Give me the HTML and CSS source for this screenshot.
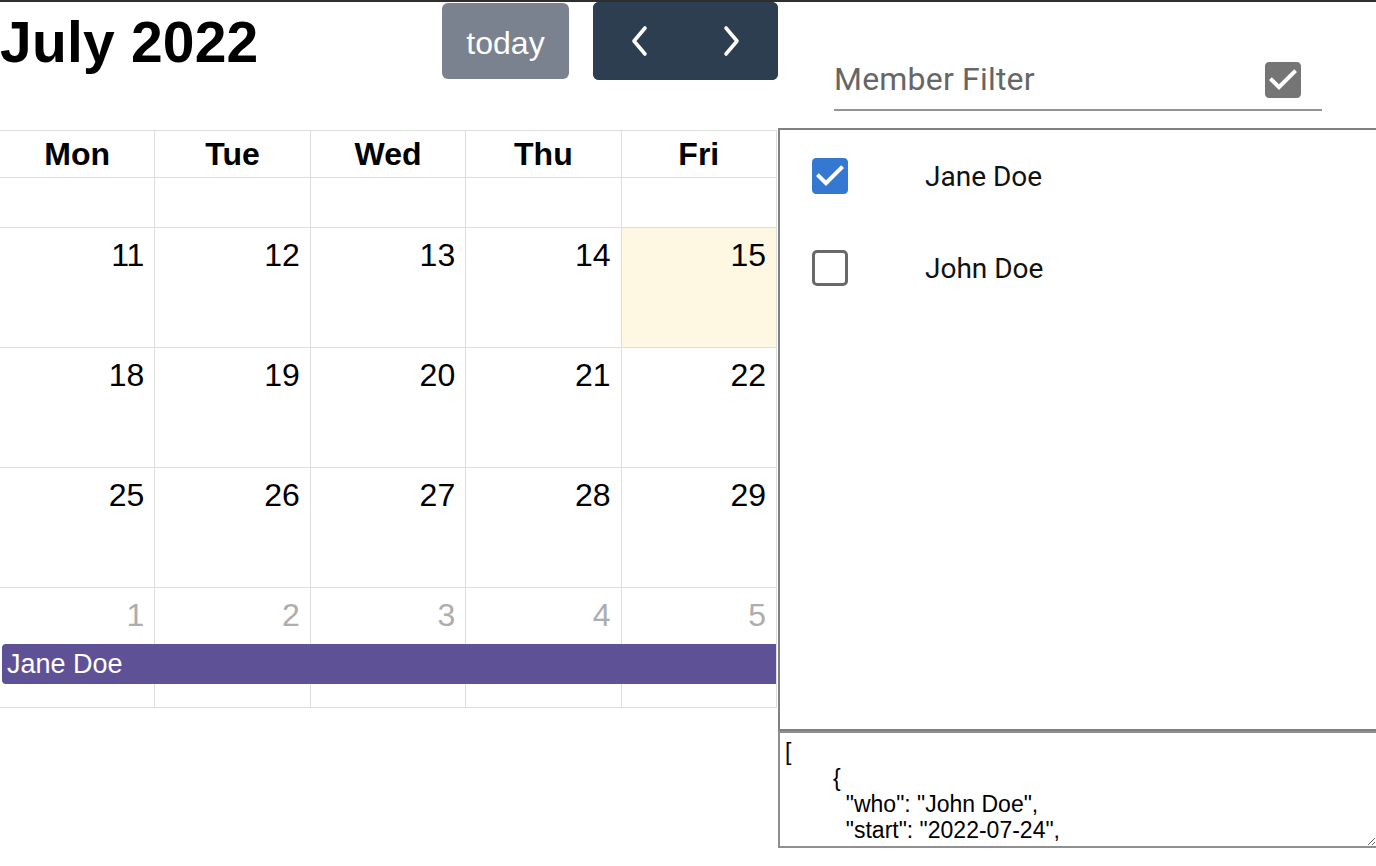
FILE: index.html
```html
<!DOCTYPE html>
<html lang="en">
<head>
<meta charset="utf-8">
<title>Calendar</title>
<link rel="stylesheet" href="styles.css">
</head>
<body>
<div class="app">
  <div class="calendar">
    <div class="toolbar">
      <h2 class="title">July 2022</h2>
      <div class="toolbar-right">
        <button class="btn btn-today" type="button">today</button>
        <div class="btn-group">
          <button class="btn btn-nav" type="button" aria-label="prev">
            <svg width="20" height="32" viewBox="0 0 20 32"><polyline points="16,3 5,16 16,29" fill="none" stroke="#fff" stroke-width="3.6" stroke-linecap="round" stroke-linejoin="round"/></svg>
          </button>
          <button class="btn btn-nav" type="button" aria-label="next">
            <svg width="20" height="32" viewBox="0 0 20 32"><polyline points="4,3 15,16 4,29" fill="none" stroke="#fff" stroke-width="3.6" stroke-linecap="round" stroke-linejoin="round"/></svg>
          </button>
        </div>
      </div>
    </div>
    <div class="grid">
      <div class="head-row">
        <div class="cell head">Mon</div>
        <div class="cell head">Tue</div>
        <div class="cell head">Wed</div>
        <div class="cell head">Thu</div>
        <div class="cell head">Fri</div>
      </div>
      <div class="week week-partial">
        <div class="cells">
          <div class="cell"></div><div class="cell"></div><div class="cell"></div><div class="cell"></div><div class="cell"></div>
        </div>
      </div>
      <div class="week">
        <div class="cells">
          <div class="cell"><div class="num">11</div></div>
          <div class="cell"><div class="num">12</div></div>
          <div class="cell"><div class="num">13</div></div>
          <div class="cell"><div class="num">14</div></div>
          <div class="cell today"><div class="num">15</div></div>
        </div>
      </div>
      <div class="week">
        <div class="cells">
          <div class="cell"><div class="num">18</div></div>
          <div class="cell"><div class="num">19</div></div>
          <div class="cell"><div class="num">20</div></div>
          <div class="cell"><div class="num">21</div></div>
          <div class="cell"><div class="num">22</div></div>
        </div>
      </div>
      <div class="week">
        <div class="cells">
          <div class="cell"><div class="num">25</div></div>
          <div class="cell"><div class="num">26</div></div>
          <div class="cell"><div class="num">27</div></div>
          <div class="cell"><div class="num">28</div></div>
          <div class="cell"><div class="num">29</div></div>
        </div>
      </div>
      <div class="week">
        <div class="cells">
          <div class="cell other"><div class="num">1</div></div>
          <div class="cell other"><div class="num">2</div></div>
          <div class="cell other"><div class="num">3</div></div>
          <div class="cell other"><div class="num">4</div></div>
          <div class="cell other"><div class="num">5</div></div>
        </div>
        <div class="events">
          <div class="event">Jane Doe</div>
        </div>
      </div>
    </div>
  </div>

  <div class="sidebar">
    <div class="filter">
      <div class="filter-field">
        <span class="filter-label">Member Filter</span>
        <svg class="filter-icon" width="48" height="48" viewBox="0 0 24 24"><path fill="#757575" d="M19 3H5c-1.11 0-2 .9-2 2v14c0 1.1.89 2 2 2h14c1.11 0 2-.9 2-2V5c0-1.1-.89-2-2-2zm-9 14l-5-5 1.41-1.41L10 14.17l7.59-7.59L19 8l-9 9z"/></svg>
      </div>
    </div>
    <div class="members">
      <div class="member">
        <svg class="check-on" width="48" height="48" viewBox="0 0 24 24"><path fill="#3478d2" d="M19 3H5c-1.11 0-2 .9-2 2v14c0 1.1.89 2 2 2h14c1.11 0 2-.9 2-2V5c0-1.1-.89-2-2-2zm-9 14l-5-5 1.41-1.41L10 14.17l7.59-7.59L19 8l-9 9z"/></svg>
        <span class="member-name">Jane Doe</span>
      </div>
      <div class="member">
        <span class="check-off"></span>
        <span class="member-name">John Doe</span>
      </div>
    </div>
    <textarea class="json" spellcheck="false">[
&#9;{
&#9;  "who": "John Doe",
&#9;  "start": "2022-07-24",
&#9;  "end": "2022-07-28"
&#9;},
&#9;{
&#9;  "who": "Jane Doe",
&#9;  "start": "2022-08-01",
&#9;  "end": "2022-08-06"
&#9;}
]</textarea>
  </div>
</div>
</body>
</html>
```

FILE: styles.css
```css
html, body {
  overflow: hidden;
}

body {
  margin: 0;
  border-top: 2px solid #2e2e2e;
  font-family: "Liberation Sans", Arial, sans-serif;
  color: #000;
  background: #fff;
}

.app {
  display: flex;
  align-items: flex-start;
}

/* ---------- calendar ---------- */
.calendar {
  width: 778px;
  flex: none;
}

.toolbar {
  height: 78px;
  display: flex;
  align-items: center;
  justify-content: space-between;
  margin-bottom: 50px;
}

.title {
  margin: 0;
  padding-top: 3px;
  font-size: 57px;
  font-weight: bold;
  line-height: 1;
  letter-spacing: 0.2px;
}

.toolbar-right {
  display: flex;
  align-items: center;
  gap: 24px;
}

.btn {
  border: 0;
  margin: 0;
  padding: 0;
  color: #fff;
  font-family: "Liberation Sans", Arial, sans-serif;
  font-size: 32px;
  display: flex;
  align-items: center;
  justify-content: center;
}

.btn-today {
  width: 127px;
  height: 76px;
  border-radius: 6px;
  background: #7a828f;
  padding-top: 4px;
}

.btn-group {
  display: flex;
  height: 78px;
  border-radius: 6px;
  overflow: hidden;
  background: #2c3e50;
}

.btn-nav {
  width: 92.5px;
  height: 78px;
  background: #2c3e50;
}

.grid {
  width: 777px;
  border-top: 1px solid #dddddd;
}

.head-row,
.cells {
  display: grid;
  grid-template-columns: repeat(5, 1fr);
}

.cell {
  border-right: 1px solid #dddddd;
  border-bottom: 1px solid #dddddd;
}

.head {
  height: 47px;
  box-sizing: border-box;
  display: flex;
  align-items: center;
  justify-content: center;
  font-size: 32px;
  font-weight: bold;
}

.week {
  display: grid;
  height: 120px;
}

.week > .cells,
.week > .events {
  grid-area: 1 / 1;
}

.week-partial {
  height: 50px;
}

.cells .cell {
  box-sizing: border-box;
}

.num {
  text-align: right;
  padding: 8px 10px;
  font-size: 32px;
  line-height: 1.2;
}

.today {
  background: #fef8e2;
}

.other .num {
  color: #adadad;
}

.events {
  padding-top: 56px;
  align-self: start;
}

.event {
  margin: 0 1px 0 2px;
  height: 40px;
  line-height: 40px;
  background: #5f5195;
  color: #fff;
  font-size: 27px;
  padding-left: 5px;
  border-radius: 4px 0 0 4px;
  white-space: nowrap;
  overflow: hidden;
}

/* ---------- sidebar ---------- */
.sidebar {
  width: 600px;
  flex: none;
  display: flex;
  flex-direction: column;
  font-family: Roboto, "Liberation Sans", sans-serif;
}

.filter {
  height: 126px;
  box-sizing: border-box;
  padding: 46px 56px 0 56px;
}

.filter-field {
  height: 61px;
  display: flex;
  align-items: center;
  justify-content: space-between;
  border-bottom: 2px solid #949494;
}

.filter-label {
  font-size: 32px;
  color: #666666;
  letter-spacing: 0.2px;
}

.filter-icon {
  margin-right: 15px;
  margin-top: 2px;
}

.members {
  height: 603px;
  box-sizing: border-box;
  border: 2px solid #808080;
  border-right: 0;
}

.member {
  height: 92px;
  display: flex;
  align-items: center;
  padding-left: 32px;
}

.check-on {
  margin-left: -6px;
  margin-right: -6px;
  flex: none;
}

.check-off {
  width: 36px;
  height: 36px;
  box-sizing: border-box;
  border: 3.5px solid #696969;
  border-radius: 5px;
  flex: none;
}

.member-name {
  margin-left: 77px;
  font-size: 28px;
  color: #111;
}

.json {
  display: block;
  width: 600px;
  height: 117px;
  box-sizing: border-box;
  margin: 0;
  border: 2px solid #8f8f8f;
  padding: 6px 5px;
  font-family: "Liberation Sans", Arial, sans-serif;
  font-size: 23px;
  line-height: 26px;
  color: #000;
  tab-size: 48px;
  overflow: hidden;
  resize: both;
  outline: none;
}
```
